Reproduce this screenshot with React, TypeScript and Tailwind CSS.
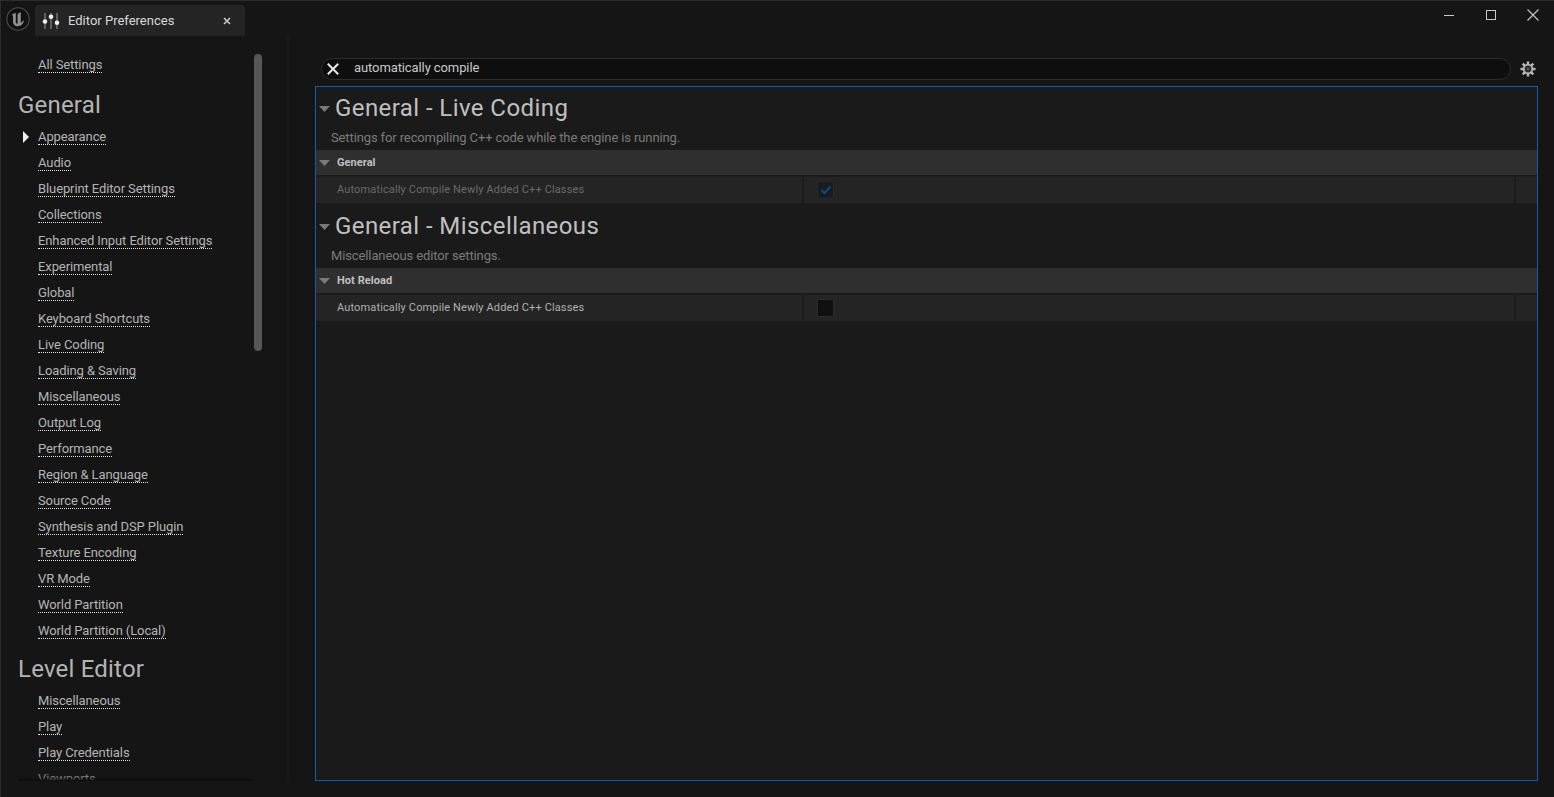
import React from "react";

const general = ["Appearance","Audio","Blueprint Editor Settings","Collections","Enhanced Input Editor Settings","Experimental","Global","Keyboard Shortcuts","Live Coding","Loading & Saving","Miscellaneous","Output Log","Performance","Region & Language","Source Code","Synthesis and DSP Plugin","Texture Encoding","VR Mode","World Partition","World Partition (Local)"];
const level = ["Miscellaneous","Play","Play Credentials","Viewports"];

function NavLink({ label, arrow }: { label: string; arrow?: boolean }) {
  return (
    <div className="relative h-[26px] pl-[37px] flex items-center">
      {arrow && (
        <svg className="absolute left-[21px] top-[7px]" width="8" height="12" viewBox="0 0 8 12"><path d="M1 0 L7 6 L1 12 Z" fill="#f0f0f0" /></svg>
      )}
      <span className="text-[13px] leading-[15px] tracking-[-0.1px] text-[#b4b4b4] border-b border-dotted border-[#e0e0e0]">{label}</span>
    </div>
  );
}

function Tri({ className }: { className?: string }) {
  return (
    <svg className={className} width="11" height="6" viewBox="0 0 11 6"><path d="M0 0 H11 L5.5 6 Z" fill="#7a7a7a" /></svg>
  );
}

function Section({ title, desc, cat, dim, checked }: { title: string; desc: string; cat: string; dim?: boolean; checked?: boolean }) {
  return (
    <div className="mb-[2px]">
      <div className="h-[63px] relative pl-[3px]">
        <div className="flex items-center h-[42px]">
          <Tri className="mr-[4px] mt-[1px]" />
          <span className="text-[24px] leading-[28px] tracking-[0.42px] text-[#c0c0c0] ml-[1px]">{title}</span>
        </div>
        <div className="text-[13px] leading-[15px] tracking-[-0.12px] text-[#7a7a7a] pl-[12px] mt-[1px]">{desc}</div>
      </div>
      <div className="h-[26px] pt-[1px] bg-[#2f2f2f] flex items-center border-b border-[#1a1a1a]">
        <Tri className="ml-[3px] mr-[7px]" />
        <span className="text-[11px] font-bold tracking-[0.05px] text-[#c0c0c0]">{cat}</span>
      </div>
      <div className="h-[27px] bg-[#242424] flex border-t border-[#1c1c1c]">
        <div className="w-[488px] flex items-center pl-[21px] border-r-2 border-[#1c1c1c]">
          <span className={"text-[11px] tracking-[0.14px] " + (dim ? "text-[#6a6a6a]" : "text-[#b0b0b0]")}>Automatically Compile Newly Added C++ Classes</span>
        </div>
        <div className="flex-1 flex items-center pl-[13px] border-r-2 border-[#1c1c1c]">
          <div className={"w-[17px] h-[18px] rounded-[2px] flex items-center justify-center " + (dim ? "bg-[#1a1d20] border border-[#2a2a2a]" : "bg-[#0f0f0f] border border-[#2a2a2a]")}>
            {checked && (
              <svg width="12" height="10" viewBox="0 0 12 10"><path d="M1.5 5 L4.5 8 L10.5 1.5" fill="none" stroke="#0f4a82" strokeWidth="2" /></svg>
            )}
          </div>
        </div>
        <div className="w-[21px]" />
      </div>
    </div>
  );
}

export default function App() {
  return (
    <div className="w-[1554px] h-[797px] overflow-hidden bg-[#151515] flex flex-col border-t border-l border-[#2c2c2c]" style={{ fontFamily: "Roboto, 'Liberation Sans', sans-serif" }}>
      <div className="h-[35px] flex shrink-0 relative">
        <div className="w-[34px] flex items-center justify-center pr-[1px] pt-[1px]">
          <svg width="24" height="24" viewBox="0 0 24 24">
            <circle cx="12" cy="12" r="11.2" fill="#101010" stroke="#4e4e4e" strokeWidth="1.1" />
            <path d="M5.5 8.5 C6.5 7 8 6.2 9.8 6 V15 C9.8 16.3 10.6 16.8 11.6 16.6 V7 L14.8 5 V16 L18.2 13 C17.6 16.6 15 19.2 11.8 19.2 C9 19.2 7 17.4 7 15 V8.2 Z" fill="#8e8e8e" />
          </svg>
        </div>
        <div className="w-[210px] h-[31px] mt-[4px] bg-[#242424] rounded-t-[4px] flex items-center pl-[7px]">
          <svg width="18" height="18" viewBox="0 0 18 18" fill="#f0f0f0">
            <rect x="2.5" y="1" width="1" height="16" fill="#999" />
            <rect x="8.5" y="1" width="1" height="16" fill="#999" />
            <rect x="14.5" y="1" width="1" height="16" fill="#999" />
            <circle cx="3" cy="9.5" r="2.3" />
            <circle cx="9" cy="4.7" r="2.3" />
            <circle cx="15" cy="10.7" r="2.3" />
          </svg>
          <span className="ml-[8px] text-[13px] tracking-[0px] text-[#d8d8d8]">Editor Preferences</span>
          <svg className="ml-auto mr-[14px]" width="8" height="8" viewBox="0 0 8 8"><path d="M1 1 L7 7 M7 1 L1 7" stroke="#c8c8c8" strokeWidth="1.6" /></svg>
        </div>
        <div className="ml-auto flex items-start mt-[7px] mr-[15px]">
          <svg className="mt-[7px]" width="10" height="2" viewBox="0 0 10 2"><rect width="10" height="1" y="0" fill="#c8c8c8" /></svg>
          <svg className="ml-[32px] mt-[2px]" width="10" height="10" viewBox="0 0 10 10"><rect x="0.5" y="0.5" width="9" height="9" fill="none" stroke="#c8c8c8" /></svg>
          <svg className="ml-[31px] mt-[1px]" width="12" height="12" viewBox="0 0 12 12"><path d="M0.5 0.5 L11.5 11.5 M11.5 0.5 L0.5 11.5" stroke="#c8c8c8" strokeWidth="1.1" /></svg>
        </div>
      </div>

      <div className="flex-1 flex min-h-0">
        <aside className="w-[288px] shrink-0 relative border-r-2 border-[#191919] h-[745px] overflow-hidden">
          <div className="pt-[16px] h-[744px] overflow-hidden">
            <NavLink label="All Settings" />
            <div className="text-[24px] leading-[28px] tracking-[0.2px] text-[#b4b4b4] pl-[17px] mt-[13px] mb-[5px]">General</div>
            {general.map((g, i) => <NavLink key={g} label={g} arrow={i === 0} />)}
            <div className="text-[24px] leading-[28px] tracking-[0.2px] text-[#b4b4b4] pl-[17px] mt-[11px] mb-[5px]">Level Editor</div>
            {level.map((g, i) => (i === 3 ? (
              <div key={g} className="h-[26px] pl-[37px] flex items-center text-[13px] tracking-[-0.1px] text-[#7e7e7e]">{g}</div>
            ) : <NavLink key={g} label={g} />))}
          </div>
          <div className="absolute left-[17px] top-[741px] w-[234px] h-[4px] bg-gradient-to-t from-[#0c0c0c] to-transparent" />
          <div className="absolute left-[253px] top-[18px] w-[8px] h-[297px] rounded-full bg-[#575757]" />
        </aside>

        <main className="flex-1 min-w-0 pr-[16px] pl-[26px]">
          <div className="flex items-center h-[22px] mt-[22px] ml-[6px]">
            <div className="w-[1190px] h-[22px] rounded-full bg-[#0e0e0e] border border-[#2c2c2c] flex items-center pl-[5px]">
              <svg width="12" height="12" viewBox="0 0 12 12"><path d="M0.8 0.8 L11.2 11.2 M11.2 0.8 L0.8 11.2" stroke="#e8e8e8" strokeWidth="2" /></svg>
              <span className="ml-[15px] text-[13px] leading-[15px] -mt-[3px] tracking-[-0.1px] text-[#c8c8c8]">automatically compile</span>
            </div>
            <svg className="ml-[9px]" width="16" height="16" viewBox="0 0 16 16">
              <g stroke="#b8b8b8" strokeWidth="2.4">
                <path d="M8 0.5 V15.5 M0.5 8 H15.5 M2.7 2.7 L13.3 13.3 M13.3 2.7 L2.7 13.3" />
              </g>
              <circle cx="8" cy="8" r="5.2" fill="#b8b8b8" />
              <circle cx="8" cy="8" r="3.4" fill="#2a2a2a" />
              <circle cx="8" cy="8" r="1.4" fill="#555" />
            </svg>
          </div>
          <div className="mt-[6px] h-[695px] border border-[#0a5cb4] bg-[#1a1a1a]">
            <Section title="General - Live Coding" desc="Settings for recompiling C++ code while the engine is running." cat="General" dim checked />
            <Section title="General - Miscellaneous" desc="Miscellaneous editor settings." cat="Hot Reload" />
          </div>
        </main>
      </div>
    </div>
  );
}
